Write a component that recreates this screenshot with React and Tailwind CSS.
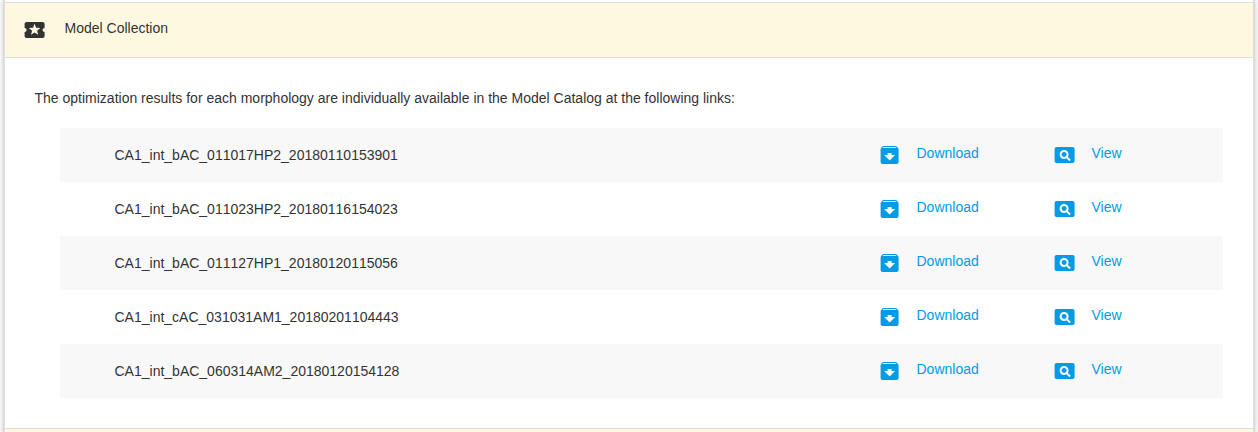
import { MdArchive, MdLocalActivity, MdPageview } from "react-icons/md";

const models = [
  "CA1_int_bAC_011017HP2_20180110153901",
  "CA1_int_bAC_011023HP2_20180116154023",
  "CA1_int_bAC_011127HP1_20180120115056",
  "CA1_int_cAC_031031AM1_20180201104443",
  "CA1_int_bAC_060314AM2_20180120154128",
];

function ActionLink({ icon: Icon, label, className }) {
  return (
    <a href="#" className={`flex shrink-0 text-[#039be5] ${className}`}>
      <Icon className="mt-[15px] size-6 shrink-0 -translate-x-[0.4px]" />
      <span className="ml-[15px] mt-[15px]">{label}</span>
    </a>
  );
}

function ModelRow({ name }) {
  return (
    <li className="flex h-[54px] pl-[54.5px] odd:bg-[#f8f8f8]">
      <span className="mt-[17px] w-[763px] shrink-0 [font-kerning:none]">{name}</span>
      <ActionLink icon={MdArchive} label="Download" className="w-[175px]" />
      <ActionLink icon={MdPageview} label="View" className="" />
    </li>
  );
}

export default function App() {
  return (
    <div className="h-[432px] overflow-hidden bg-[#fafafa] pl-[3px] pr-[3px] font-['Liberation_Sans',Arial,sans-serif] text-[14px] leading-[21px] text-[#333]">
      <div className="flex h-full flex-col border-x-2 border-[#ddd] bg-white shadow-[0_1px_4px_rgba(0,0,0,0.2)]">
        <div className="h-[2px] shrink-0" />
        <header className="flex h-14 shrink-0 border-y border-[#ddd] bg-[#fff8e1] pl-[17.5px]">
          <MdLocalActivity className="mt-[15px] size-6 shrink-0 -translate-x-[0.4px]" />
          <span className="ml-[18px] mt-[15px]">Model Collection</span>
        </header>
        <main className="h-[370px] shrink-0 pl-[29.5px] pr-[30px] pt-[30px]">
          <p>The optimization results for each morphology are individually available in the Model Catalog at the following links:</p>
          <ul className="ml-[25.5px] mt-[19px]">
            {models.map((name) => (
              <ModelRow key={name} name={name} />
            ))}
          </ul>
        </main>
        <div className="h-4 shrink-0 border-t border-[#ddd] bg-[#fff8e1]" />
      </div>
    </div>
  );
}
